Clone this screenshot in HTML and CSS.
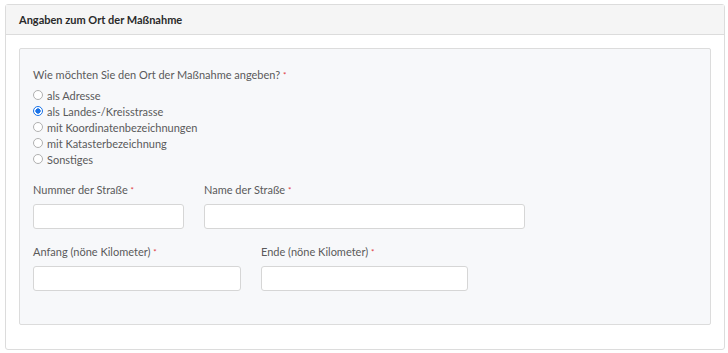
FILE: index.html
```html
<!DOCTYPE html>
<html>
<head>
  <meta charset="utf-8">
  <title>Angaben zum Ort der Maßnahme</title>
  <link rel="stylesheet" href="styles.css">
</head>
<body>
  <div class="card">
    <div class="card-header">Angaben zum Ort der Maßnahme</div>
    <div class="card-body">
      <div class="panel">
        <div class="question">Wie möchten Sie den Ort der Maßnahme angeben? <span class="req">*</span></div>
        <div class="radio-list">
          <label class="radio"><input type="radio" name="ort"> als Adresse</label>
          <label class="radio"><input type="radio" name="ort" checked> als Landes-/Kreisstrasse</label>
          <label class="radio"><input type="radio" name="ort"> mit Koordinatenbezeichnungen</label>
          <label class="radio"><input type="radio" name="ort"> mit Katasterbezeichnung</label>
          <label class="radio"><input type="radio" name="ort"> Sonstiges</label>
        </div>

        <div class="field-row row-street">
          <div class="field">
            <label for="str-nr">Nummer der Straße <span class="req">*</span></label>
            <input type="text" id="str-nr" class="text-input">
          </div>
          <div class="field">
            <label for="str-name">Name der Straße <span class="req">*</span></label>
            <input type="text" id="str-name" class="text-input">
          </div>
        </div>

        <div class="field-row row-km">
          <div class="field">
            <label for="km-start">Anfang (nöne Kilometer) <span class="req">*</span></label>
            <input type="text" id="km-start" class="text-input">
          </div>
          <div class="field">
            <label for="km-end">Ende (nöne Kilometer) <span class="req">*</span></label>
            <input type="text" id="km-end" class="text-input">
          </div>
        </div>
      </div>
    </div>
  </div>
</body>
</html>
```

FILE: styles.css
```css
body {
  font-family: 'Lato', 'Open Sans', sans-serif;
  font-size: 11px;
  color: #5a5a5a;
  margin: 0;
  padding: 4px 0 0 5px;
  background-color: #fff;
}

/* Outer card */
.card {
  width: 720px;
  box-sizing: border-box;
  border: 1px solid #dcdcdc;
  border-radius: 3px;
  background-color: #fff;
}
.card-header {
  background-color: #f5f5f5;
  border-bottom: 1px solid #dcdcdc;
  height: 29px;
  line-height: 29px;
  padding-left: 13px;
  font-weight: bold;
  color: #2a2a2a;
}
.card-body {
  padding: 13px 13px 24px 13px;
}

/* Inner grey panel */
.panel {
  background-color: #f7f8fa;
  border: 1px solid #dcdcdc;
  border-radius: 2px;
  padding: 18px 13px 33px 13px;
}
.question {
  line-height: 16px;
  margin-bottom: 4px;
}
.req {
  color: #e0353b;
  font-size: 8px;
  vertical-align: top;
}
.radio-list {
  display: flex;
  flex-direction: column;
}
.radio {
  display: flex;
  align-items: center;
  gap: 4px;
  height: 16px;
}
.radio input {
  -webkit-appearance: none;
  appearance: none;
  box-sizing: border-box;
  margin: 0;
  width: 10px;
  height: 10px;
  border: 1px solid #b0b0b0;
  border-radius: 50%;
  background-color: #fff;
}
.radio input:checked {
  border-color: #1a73e8;
  background: radial-gradient(circle, #1a73e8 0 2.4px, #fff 2.9px);
}

/* Input rows */
.field-row {
  display: grid;
  gap: 20px;
}
.row-street {
  grid-template-columns: 151px 321px;
  margin-top: 15px;
}
.row-km {
  grid-template-columns: 208px 207px;
  margin-top: 15px;
}
.field {
  display: flex;
  flex-direction: column;
}
.field label {
  line-height: 16px;
  margin-bottom: 6px;
}
.text-input {
  box-sizing: border-box;
  height: 25px;
  width: 100%;
  border: 1px solid #d6d6d6;
  border-radius: 3px;
  background-color: #fff;
  margin: 0;
}
```
